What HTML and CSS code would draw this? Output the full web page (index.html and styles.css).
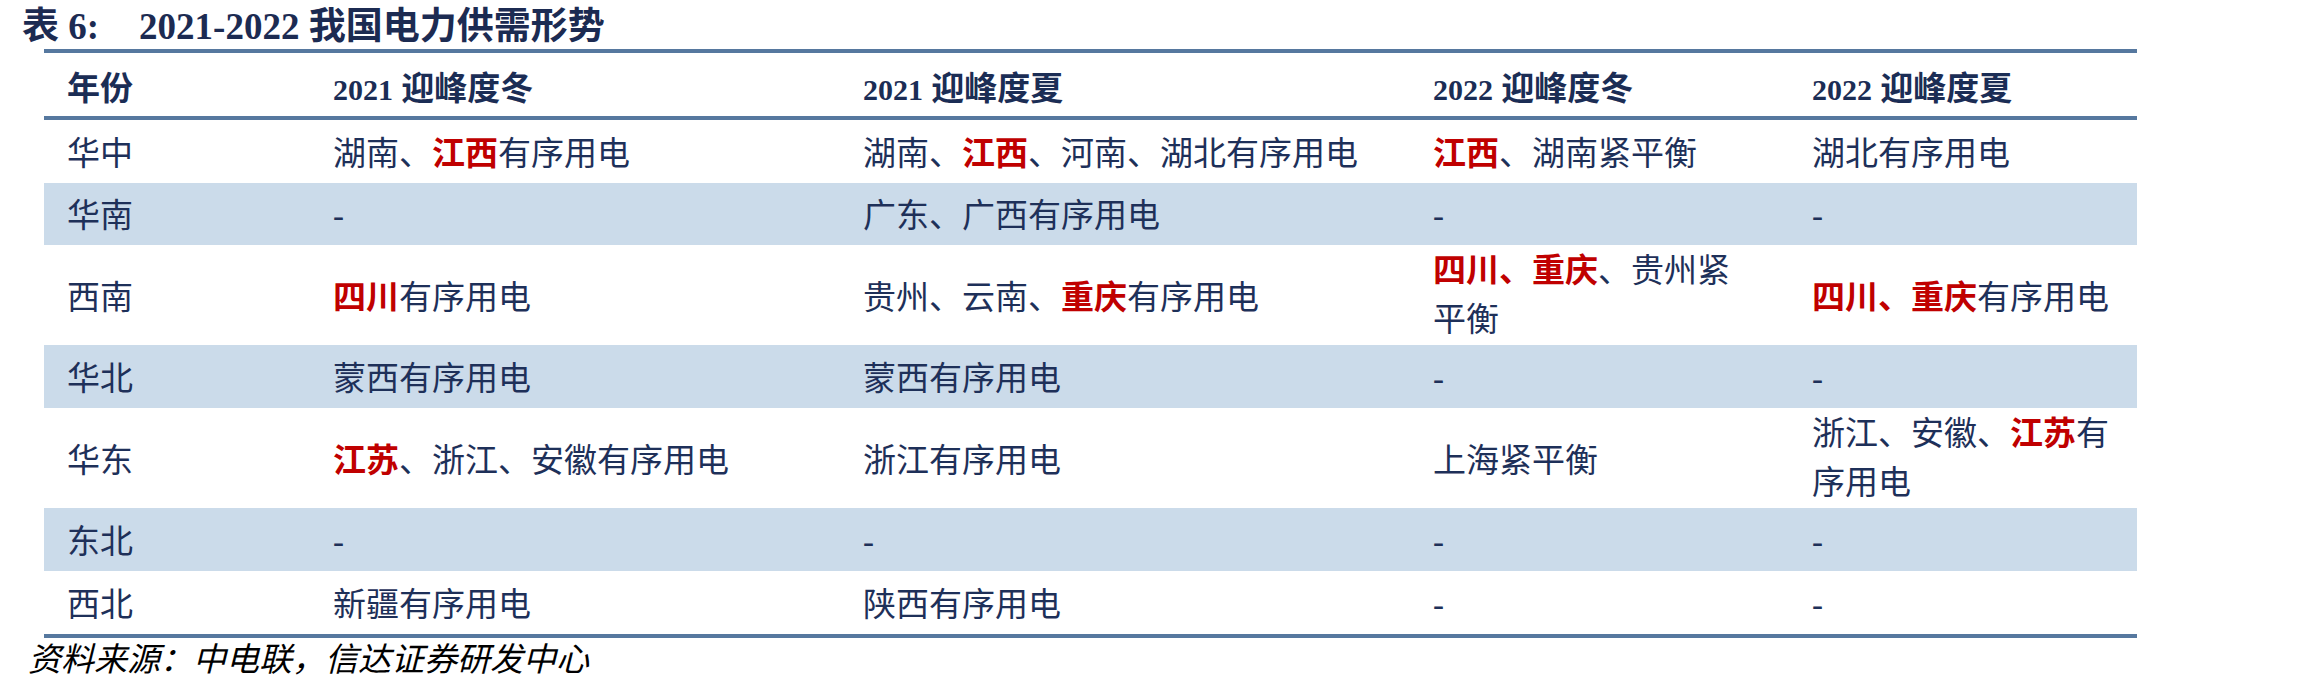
FILE: index.html
```html
<!DOCTYPE html>
<html lang="zh-CN">
<head>
<meta charset="utf-8">
<title>表 6: 2021-2022 我国电力供需形势</title>
<link rel="stylesheet" href="styles.css">
</head>
<body>
<div class="page">
  <h1 class="title"><span class="tno">表 6:</span>2021-2022 我国电力供需形势</h1>
  <table class="grid">
    <colgroup>
      <col class="c0"><col class="c1"><col class="c2"><col class="c3"><col class="c4">
    </colgroup>
    <thead>
      <tr>
        <th>年份</th>
        <th><span class="n">2021</span> 迎峰度冬</th>
        <th><span class="n">2021</span> 迎峰度夏</th>
        <th><span class="n">2022</span> 迎峰度冬</th>
        <th><span class="n">2022</span> 迎峰度夏</th>
      </tr>
    </thead>
    <tbody>
      <tr>
        <td>华中</td>
        <td>湖南、<b class="hl">江西</b>有序用电</td>
        <td>湖南、<b class="hl">江西</b>、河南、湖北有序用电</td>
        <td><b class="hl">江西</b>、湖南紧平衡</td>
        <td>湖北有序用电</td>
      </tr>
      <tr class="alt r2">
        <td>华南</td>
        <td>-</td>
        <td>广东、广西有序用电</td>
        <td>-</td>
        <td>-</td>
      </tr>
      <tr>
        <td>西南</td>
        <td><b class="hl">四川</b>有序用电</td>
        <td>贵州、云南、<b class="hl">重庆</b>有序用电</td>
        <td class="wrap"><b class="hl">四川、重庆</b>、贵州紧<br>平衡</td>
        <td><b class="hl">四川、重庆</b>有序用电</td>
      </tr>
      <tr class="alt">
        <td>华北</td>
        <td>蒙西有序用电</td>
        <td>蒙西有序用电</td>
        <td>-</td>
        <td>-</td>
      </tr>
      <tr>
        <td>华东</td>
        <td><b class="hl">江苏</b>、浙江、安徽有序用电</td>
        <td>浙江有序用电</td>
        <td>上海紧平衡</td>
        <td class="wrap">浙江、安徽、<b class="hl">江苏</b>有<br>序用电</td>
      </tr>
      <tr class="alt">
        <td>东北</td>
        <td>-</td>
        <td>-</td>
        <td>-</td>
        <td>-</td>
      </tr>
      <tr>
        <td>西北</td>
        <td>新疆有序用电</td>
        <td>陕西有序用电</td>
        <td>-</td>
        <td>-</td>
      </tr>
    </tbody>
  </table>
  <p class="source">资料来源：中电联，信达证券研发中心</p>
</div>
</body>
</html>
```

FILE: styles.css
```css
html, body {
  margin: 0;
  padding: 0;
  background: #ffffff;
}

body {
  font-family: "Liberation Serif", "Noto Sans CJK SC", serif;
  color: #1e3059;
}

.page {
  width: 2303px;
  height: 691px;
  overflow: hidden;
}

.title {
  margin: 0;
  padding: 4px 0 0 22px;
  height: 45px;
  line-height: 45px;
  font-size: 37px;
  font-weight: bold;
  color: #1c2b52;
  white-space: nowrap;
}

.tno {
  display: inline-block;
  margin-right: 40px;
}

.grid {
  margin-left: 44px;
  width: 2093px;
  table-layout: fixed;
  border-collapse: separate;
  border-spacing: 0;
  border-top: 4px solid #56789f;
  border-bottom: 4px solid #56789f;
}

.c0 { width: 266px; }
.c1 { width: 530px; }
.c2 { width: 570px; }
.c3 { width: 379px; }
.c4 { width: 348px; }

.grid th {
  text-align: left;
  font-weight: bold;
  font-size: 33px;
  line-height: 53px;
  padding: 10px 0 0 23px;
  border-bottom: 4px solid #56789f;
  color: #1b2d55;
  white-space: nowrap;
}

.grid th .n {
  font-size: 30px;
}

.grid td {
  font-size: 33px;
  line-height: 50px;
  padding: 9px 0 4px 23px;
  vertical-align: middle;
  white-space: nowrap;
}

.grid tr.r2 td {
  padding: 8px 0 4px 23px;
}

.grid td.wrap {
  padding-top: 2px;
  padding-bottom: 0;
  line-height: 49px;
}

.grid tr.alt td {
  background: #cbdbea;
}

.hl {
  color: #c00000;
  font-weight: bold;
}

.source {
  margin: 0;
  padding: 2px 0 0 28px;
  font-size: 33px;
  line-height: 40px;
  font-style: italic;
  color: #000000;
  white-space: nowrap;
}
```
